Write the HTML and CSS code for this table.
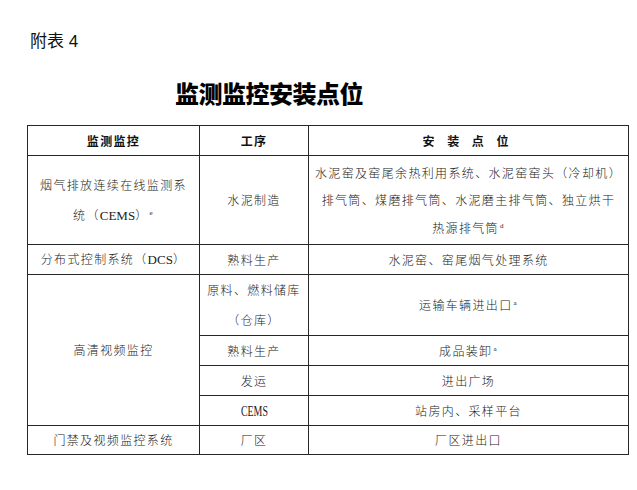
FILE: index.html
```html
<!DOCTYPE html>
<html lang="zh-CN">
<head>
<meta charset="utf-8">
<link rel="stylesheet" href="styles.css">
</head>
<body>
<div class="page">
  <div class="label">附表 4</div>
  <h1 class="title">监测监控安装点位</h1>
  <table class="grid">
    <colgroup>
      <col class="c1"><col class="c2"><col class="c3">
    </colgroup>
    <thead>
      <tr class="h30">
        <th>监测监控</th>
        <th>工序</th>
        <th class="wide">安 装 点 位</th>
      </tr>
    </thead>
    <tbody>
      <tr class="h89">
        <td class="lh30">烟气排放连续在线监测系<br>统（<span class="lat">CEMS</span>）<sup>e</sup></td>
        <td>水泥制造</td>
        <td class="lh28">水泥窑及窑尾余热利用系统、水泥窑窑头（冷却机）<br>排气筒、煤磨排气筒、水泥磨主排气筒、独立烘干<br>热源排气筒<sup>d</sup></td>
      </tr>
      <tr class="h30">
        <td>分布式控制系统（<span class="lat">DCS</span>）</td>
        <td>熟料生产</td>
        <td>水泥窑、窑尾烟气处理系统</td>
      </tr>
      <tr class="h59">
        <td rowspan="4">高清视频监控</td>
        <td class="lh30">原料、燃料储库<br>（仓库）</td>
        <td>运输车辆进出口<sup>a</sup></td>
      </tr>
      <tr class="h30">
        <td>熟料生产</td>
        <td>成品装卸<sup>a</sup></td>
      </tr>
      <tr class="h30">
        <td>发运</td>
        <td>进出广场</td>
      </tr>
      <tr class="h30">
        <td><span class="lat cond">CEMS</span></td>
        <td>站房内、采样平台</td>
      </tr>
      <tr class="h29">
        <td>门禁及视频监控系统</td>
        <td>厂区</td>
        <td>厂区进出口</td>
      </tr>
    </tbody>
  </table>
</div>
</body>
</html>
```

FILE: styles.css
```css
html, body {
  margin: 0;
  padding: 0;
  background: #ffffff;
}

.page {
  padding: 31px 0 0 27px;
  color: #1a1a1a;
}

.label {
  font-family: "Liberation Sans", "Noto Sans CJK SC", sans-serif;
  font-size: 17px;
  line-height: 22px;
  margin: 0 0 0 3px;
  color: #111;
}

.title {
  font-family: "Noto Sans CJK SC", serif;
  font-weight: 900;
  font-size: 24px;
  line-height: 30px;
  letter-spacing: -0.5px;
  margin: 25px 0 0 148px;
  color: #000;
}

.grid {
  border-collapse: collapse;
  width: 601px;
  margin-top: 17px;
  table-layout: fixed;
  font-family: "Noto Sans CJK SC", sans-serif;
  font-size: 12px;
  font-weight: 300;
  letter-spacing: 1.35px;
  color: #222;
}

.c1 { width: 172px; }
.c2 { width: 109px; }
.c3 { width: 320px; }

.grid th,
.grid td {
  border: 1.5px solid #262626;
  text-align: center;
  vertical-align: middle;
  padding: 0 2px;
  line-height: 20px;
  white-space: nowrap;
}

.grid th {
  font-weight: 700;
  color: #111;
}

.grid th.wide {
  letter-spacing: 6px;
  word-spacing: -2px;
}

.h30 { height: 30px; }
.h29 { height: 29px; }
.h59 { height: 59px; }
.h89 { height: 89px; }

.grid td.lh30 { line-height: 30px; }
.grid td.lh28 { line-height: 27.5px; }

.lat {
  font-family: "Liberation Serif", serif;
  font-weight: 400;
  font-size: 13px;
  letter-spacing: 0;
  color: #222;
}

.lat.cond {
  display: inline-block;
  font-size: 15px;
  transform: scaleX(0.66);
}

sup {
  font-family: "Liberation Serif", serif;
  font-size: 7px;
  line-height: 0;
  vertical-align: 5px;
  margin-left: 1px;
  font-weight: 400;
}
```
